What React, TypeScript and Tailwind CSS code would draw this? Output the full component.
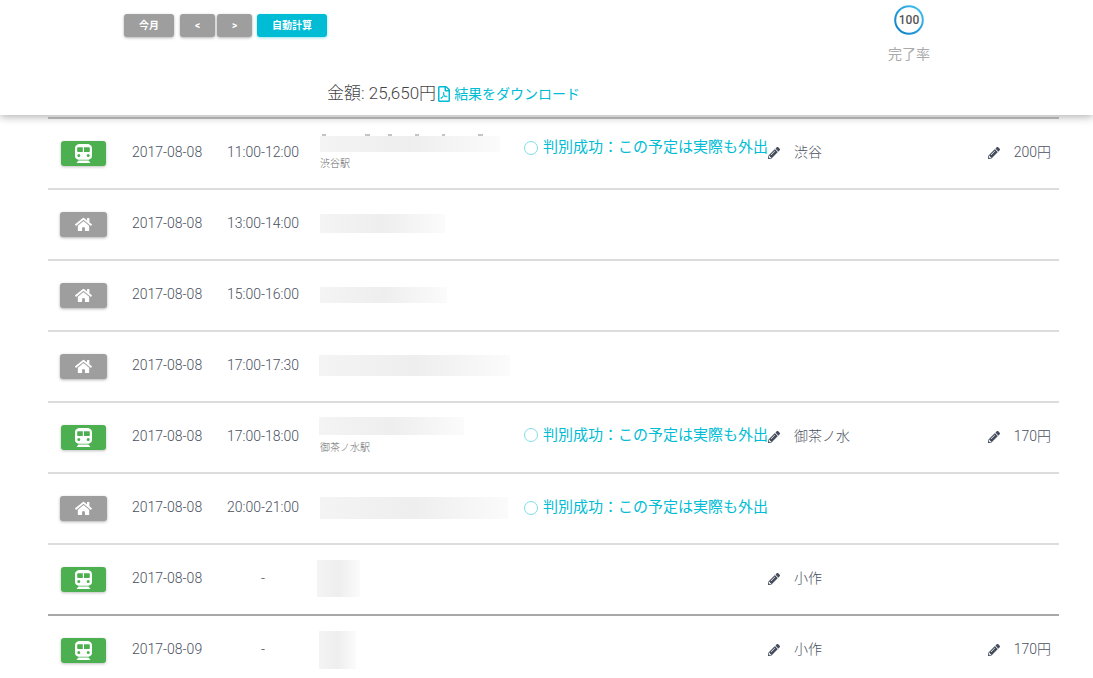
import React from 'react';
import { FaHome, FaPencilAlt, FaRegFilePdf } from 'react-icons/fa';

interface Row {
  kind: 'train' | 'home';
  date: string;
  time: string;
  blur: string;
  sub?: string;
  subGap?: string;
  ok?: string;
  place?: string;
  price?: string;
  dark?: boolean;
  specks?: boolean;
}

const rows: Row[] = [
  { kind: 'train', date: '2017-08-08', time: '11:00-12:00', blur: 'ml-[21px] h-4 w-[180px]', sub: '渋谷駅', subGap: 'mt-[6px] mb-[2px]', ok: 'mb-[10px]', place: '渋谷', price: '200円', specks: true },
  { kind: 'home', date: '2017-08-08', time: '13:00-14:00', blur: 'ml-[21px] h-[19px] w-[125px]' },
  { kind: 'home', date: '2017-08-08', time: '15:00-16:00', blur: 'ml-[21px] h-4 w-[127px]' },
  { kind: 'home', date: '2017-08-08', time: '17:00-17:30', blur: 'ml-5 h-[21px] w-[191px]' },
  { kind: 'train', date: '2017-08-08', time: '17:00-18:00', blur: 'ml-5 h-[18px] w-[145px]', sub: '御茶ノ水駅', subGap: 'mt-[7px] mb-[3px]', ok: 'mb-[3px]', place: '御茶ノ水', price: '170円' },
  { kind: 'home', date: '2017-08-08', time: '20:00-21:00', blur: 'ml-[21px] h-[22px] w-[188px]', ok: 'mb-0' },
  { kind: 'train', date: '2017-08-08', time: '-', blur: 'ml-[18px] h-[37px] w-[43px]', place: '小作', dark: true },
  { kind: 'train', date: '2017-08-09', time: '-', blur: 'ml-5 h-[38px] w-[37px]', place: '小作', price: '170円' },
];

const TrainIcon = () => (
  <svg viewBox="0 0 17 19" className="h-[19px] w-[17px]" fill="currentColor">
    <path
      fillRule="evenodd"
      d="M5 0h7c2.8 0 5 1.8 5 4v8c0 2-1.6 3.5-3.6 3.8H3.6C1.6 15.500 0 14 0 12V4C0 1.800 2.200 0 5 0zM3 3.200c-.5 0-.8.3-.8.800v3.200c0 .5.3.8.8.8h4.800V3.200H3zm6 0v4.800h5c.5 0 .8-.3.8-.8V4c0-.5-.3-.8-.8-.8H9zM3.800 10a1.500 1.500 0 1 0 0 3 1.500 1.500 0 0 0 0-3zm9.400 0a1.500 1.500 0 1 0 0 3 1.500 1.500 0 0 0 0-3z"
    />
    <path d="M3.500 16.500h10l2 2.500H1.500z" />
  </svg>
);

const ListRow: React.FC<{ row: Row }> = ({ row }) => {
  return (
    <div className={`flex h-[71px] shrink-0 items-center border-b-2 pb-0.5 text-[14px] font-light text-[#4a5060] ${row.dark ? 'border-[#a8a8a8]' : 'border-[#dcdcdc]'}`}>
      <div className="mt-0.5 w-[84px] shrink-0 pl-3">
        {row.kind === 'train' ? (
          <div className="ml-px flex h-[25px] w-[45px] items-center justify-center rounded-[3px] bg-[#4caf50] text-white shadow-[0_1px_3px_rgba(0,0,0,0.25)]">
            <TrainIcon />
          </div>
        ) : (
          <div className="flex h-[25px] w-[47px] items-center justify-center rounded-[3px] bg-[#9e9e9e] text-white shadow-[0_1px_3px_rgba(0,0,0,0.3)]">
            <FaHome size={17} />
          </div>
        )}
      </div>
      <div className="w-[95px] shrink-0">{row.date}</div>
      <div className="w-[72px] shrink-0 whitespace-nowrap text-center">{row.time}</div>
      <div className="w-[224px] shrink-0">
        {row.specks && (
          <svg viewBox="0 0 180 3" className="ml-[21px] block h-[3px] w-[180px] text-[#c4c4c4]" fill="currentColor">
            <rect x="2" y="1" width="4" height="2" />
            <rect x="45" y="1" width="5" height="2" />
            <rect x="68" y="1" width="4" height="2" />
            <rect x="95" y="1" width="4" height="2" />
            <rect x="122" y="1" width="3" height="2" />
            <rect x="158" y="1" width="5" height="2" />
          </svg>
        )}
        <div className={`bg-gradient-to-r from-[#f4f4f5] via-[#eeeeef] to-[#fbfbfb] ${row.blur}`} />
        {row.sub && <div className={`ml-[21px] text-[10px] leading-[12px] text-[#666] ${row.subGap}`}>{row.sub}</div>}
      </div>
      <div className="w-[245px] shrink-0 whitespace-nowrap text-[15px] font-normal text-[#00bcd4]">
        {row.ok && (
          <div className={`flex items-center ${row.ok}`}>
            <span className="flex w-5 shrink-0 items-center pl-px">
              <span className="h-[14px] w-[14px] rounded-full border border-[#7fdde9]" />
            </span>
            <span>判別成功：この予定は実際も外出</span>
          </div>
        )}
      </div>
      <div className="w-[26px] shrink-0">{row.place && <FaPencilAlt size={12} className="text-[#454c5c]" />}</div>
      <div className="w-[193px] shrink-0">{row.place}</div>
      <div className="w-[26px] shrink-0 pl-px">{row.price && <FaPencilAlt size={12} className="text-[#454c5c]" />}</div>
      <div className="w-[38px] shrink-0 whitespace-nowrap text-right">{row.price}</div>
    </div>
  );
};

export default function App() {
  return (
    <div className="flex h-[678px] flex-col overflow-hidden bg-white font-['Roboto','Noto_Sans_CJK_JP',sans-serif]">
      {/* Header */}
      <div className="relative z-10 h-[115px] shrink-0 bg-white shadow-[0_2px_8px_rgba(0,0,0,0.3)]">
        <div className="flex h-[72px] items-start">
          <div className="ml-[124px] mt-[14px] flex w-[764px] text-[10px] font-bold text-white">
            <button className="h-[23px] w-[50px] rounded-[3px] bg-[#9e9e9e] shadow-[0_1px_3px_rgba(0,0,0,0.3)]">今月</button>
            <button className="ml-1.5 h-[23px] w-[35px] rounded-[3px] bg-[#9e9e9e] shadow-[0_1px_3px_rgba(0,0,0,0.3)]">&lt;</button>
            <button className="ml-0.5 h-[23px] w-[35px] rounded-[3px] bg-[#9e9e9e] shadow-[0_1px_3px_rgba(0,0,0,0.3)]">&gt;</button>
            <button className="ml-[5px] h-[23px] w-[70px] rounded-[3px] bg-[#00bcd4] shadow-[0_1px_3px_rgba(0,188,212,0.4)]">自動計算</button>
          </div>
          <div className="flex w-[42px] flex-col items-center pt-[5px]">
            <div className="relative h-[30px] w-[30px]">
              <svg viewBox="0 0 30 30" className="h-[30px] w-[30px]">
                <defs>
                  <linearGradient id="ring" x1="0" y1="1" x2="1" y2="0">
                    <stop offset="0" stopColor="#0b7cc4" />
                    <stop offset="1" stopColor="#45c4f2" />
                  </linearGradient>
                </defs>
                <circle cx="15" cy="15" r="13.800" fill="none" stroke="url(#ring)" strokeWidth="2" />
              </svg>
              <span className="absolute inset-0 flex items-center justify-center text-[12px] font-medium text-[#555]">100</span>
            </div>
            <div className="mt-[9px] whitespace-nowrap text-[14px] leading-5 text-[#aaa]">完了率</div>
          </div>
        </div>
        <div className="ml-[327px] flex h-10 items-center pt-1 whitespace-nowrap text-[17px] font-light text-[#444]">
          <span>金額: 25,650円</span>
          <FaRegFilePdf size={16} className="text-[#00bcd4]" />
          <span className="ml-[2px] text-[14px] font-normal text-[#00bcd4]">結果をダウンロード</span>
        </div>
      </div>

      {/* List */}
      <div className="mx-[48px] mt-[2px] w-[1011px]">
        <div className="h-[2px] bg-[#c4c4c4]" />
        {rows.map((row, i) => (
          <ListRow key={i} row={row} />
        ))}
      </div>
    </div>
  );
}
